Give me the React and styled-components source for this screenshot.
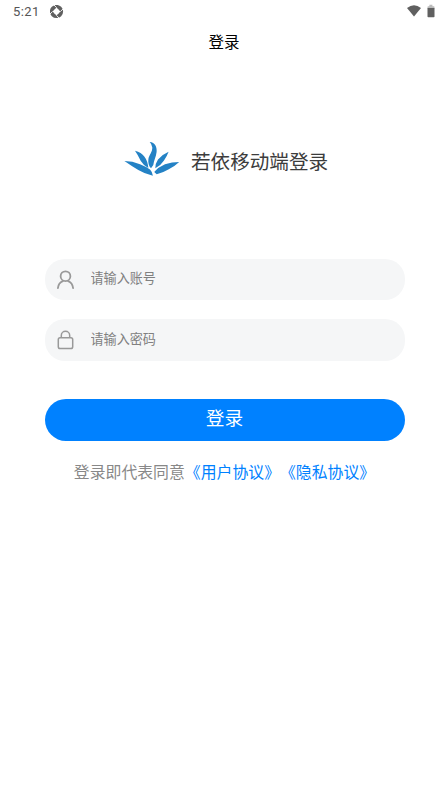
import React from "react";
import styled, { createGlobalStyle } from "styled-components";

const GlobalStyle = createGlobalStyle`
  * { box-sizing: border-box; }
  body { margin: 0; background: #fff; overflow: hidden; font-family: Roboto, "Noto Sans CJK SC", sans-serif; text-spacing-trim: space-all; }
  svg { display: block; flex: none; }
`;

const Screen = styled.main`
  width: 448px;
  height: 798px;
  background: #fff;
  display: flex;
  flex-direction: column;
`;

const StatusBar = styled.div`
  height: 23px;
  padding: 0 13px 0 13px;
  display: flex;
  align-items: center;
  color: #555;
`;

const Clock = styled.span`
  font-size: 13px;
  line-height: 23px;
  letter-spacing: 0.4px;
  width: 36.5px;
`;

const StatusIcons = styled.div`
  margin-left: auto;
  padding-bottom: 2px;
  display: flex;
  align-items: center;
  gap: 6px;
`;

const NavBar = styled.header`
  height: 41px;
  padding-top: 1px;
  line-height: 39px;
  text-align: center;
  font-size: 15.5px;
  color: #000;
`;

const Brand = styled.div`
  height: 60px;
  margin-top: 65px;
  padding-left: 124px;
  display: flex;
  align-items: center;
`;

const BrandTitle = styled.h1`
  margin: 7px 0 0 11px;
  font-size: 19.6px;
  line-height: 30px;
  font-weight: 400;
  color: #3c3c3c;
`;

const Form = styled.form`
  margin: 70px 43.5px 0 44.5px;
  display: flex;
  flex-direction: column;
`;

const Field = styled.label`
  height: ${(p) => p.$height}px;
  margin-bottom: ${(p) => p.$gap}px;
  padding-left: 12px;
  display: flex;
  align-items: center;
  gap: 16px;
  border-radius: 20px;
  background: #f5f6f7;
`;

const Input = styled.input`
  flex: 1;
  min-width: 0;
  height: 24px;
  padding: 0;
  margin-bottom: 2px;
  border: 0;
  outline: 0;
  background: transparent;
  font-family: inherit;
  font-size: 13.1px;
  color: #333;
  &::placeholder { color: #808080; opacity: 1; }
`;

const LoginButton = styled.button`
  height: 42px;
  padding: 0 0 2px;
  border: 0;
  border-radius: 21px;
  background: #0081ff;
  color: #fff;
  font-family: inherit;
  font-size: 18.7px;
  line-height: 38px;
`;

const Agreement = styled.p`
  margin: 20px 0 0;
  text-align: center;
  white-space: nowrap;
  font-size: 15.87px;
  line-height: 24px;
  color: #888;
`;

const PolicyLink = styled.span`
  color: #0081ff;
`;

const Aperture = () => (
  <svg width="14" height="14" viewBox="0 0 14 14">
    <circle cx="6.5" cy="6.5" r="4.6" fill="none" stroke="#606060" strokeWidth="4" />
    <path d="M6.5 2.6 10.4 6.5 6.5 10.4 2.6 6.5Z" fill="#fff" />
    <path d="M6.5 2.6 4 0M10.4 6.5 13 4M6.5 10.4 9 13M2.6 6.5 0 9" stroke="#fff" strokeWidth=".9" />
  </svg>
);

const Wifi = () => (
  <svg width="14" height="12" viewBox="0 0 14 12">
    <path d="M0 3Q7-2.4 14 3L7 11.5Z" fill="#606060" />
  </svg>
);

const Battery = () => (
  <svg width="8" height="14" viewBox="0 0 8 14">
    <path d="M2.4.8h3v1.4h1.3q.8 0 .8.8v1.5H.5V3q0-.8.8-.8h1.1Z" fill="#bbb" />
    <path d="M.5 4h7v8.6q0 .7-.8.7H1.3q-.8 0-.8-.7Z" fill="#606060" />
  </svg>
);

const Logo = () => (
  <svg width="56" height="36" viewBox="0 0 56 36" fill="#2482c5">
    <path d="M25.7 1C31 1.5 33.2 6 32.6 11C32 16 30 19 29.3 24L27 27.3C24.8 25 23.9 22 24.4 18C25 14 28.5 11 28.3 6.5Q27.8 3 25.7 1Z" />
    <path d="M11 9.7Q17.5 11.5 20.3 15.5Q23.8 20 24.3 27Q19.5 24.5 16.8 20Q14 14 11 9.7Z" />
    <path d="M44.6 10.7Q42.8 15.5 40 19.5Q36.8 24.5 31.3 27.3Q31.2 22.5 34 18.5Q38 13.5 44.6 10.7Z" />
    <path d="M.4 20.1Q8.5 20.2 16 23.2Q22 25.5 26 28.5Q28.5 31 28.9 34.8Q21 33 14.3 29Q7 24.8 .4 20.1Z" />
    <path d="M55.2 21Q50 26 44.3 28.5Q38.5 32 32.7 33.2L30.2 30.9Q34.5 26 41 23.3Q48 21 55.2 21Z" />
  </svg>
);

const UserIcon = () => (
  <svg width="18" height="20" viewBox="0 0 18 20" fill="none" stroke="#999" strokeWidth="1.8" strokeLinecap="round">
    <circle cx="8.5" cy="6.2" r="4.9" />
    <path d="M.9 18.2Q1.4 12.8 5.8 11.1M11.2 11.1Q15.6 12.8 16.1 18.2" />
  </svg>
);

const LockIcon = () => (
  <svg width="18" height="20" viewBox="0 0 18 20" fill="none" stroke="#999" strokeWidth="1.5">
    <rect x="1.3" y="7.8" width="14.4" height="10.8" rx="1.8" />
    <path d="M4.3 7.8V5.4a4.2 4.2 0 0 1 8.4 0v2.4" />
  </svg>
);

export default function App() {
  return (
    <Screen>
      <GlobalStyle />
      <StatusBar>
        <Clock>5:21</Clock>
        <Aperture />
        <StatusIcons>
          <Wifi />
          <Battery />
        </StatusIcons>
      </StatusBar>
      <NavBar>登录</NavBar>
      <Brand>
        <Logo />
        <BrandTitle>若依移动端登录</BrandTitle>
      </Brand>
      <Form onSubmit={(e) => e.preventDefault()}>
        <Field $height={41} $gap={19}>
          <UserIcon />
          <Input type="text" placeholder="请输入账号" />
        </Field>
        <Field $height={42.4} $gap={37.6}>
          <LockIcon />
          <Input type="password" placeholder="请输入密码" />
        </Field>
        <LoginButton type="submit">登录</LoginButton>
        <Agreement>
          登录即代表同意
          <PolicyLink>《用户协议》</PolicyLink>
          <PolicyLink>《隐私协议》</PolicyLink>
        </Agreement>
      </Form>
    </Screen>
  );
}
